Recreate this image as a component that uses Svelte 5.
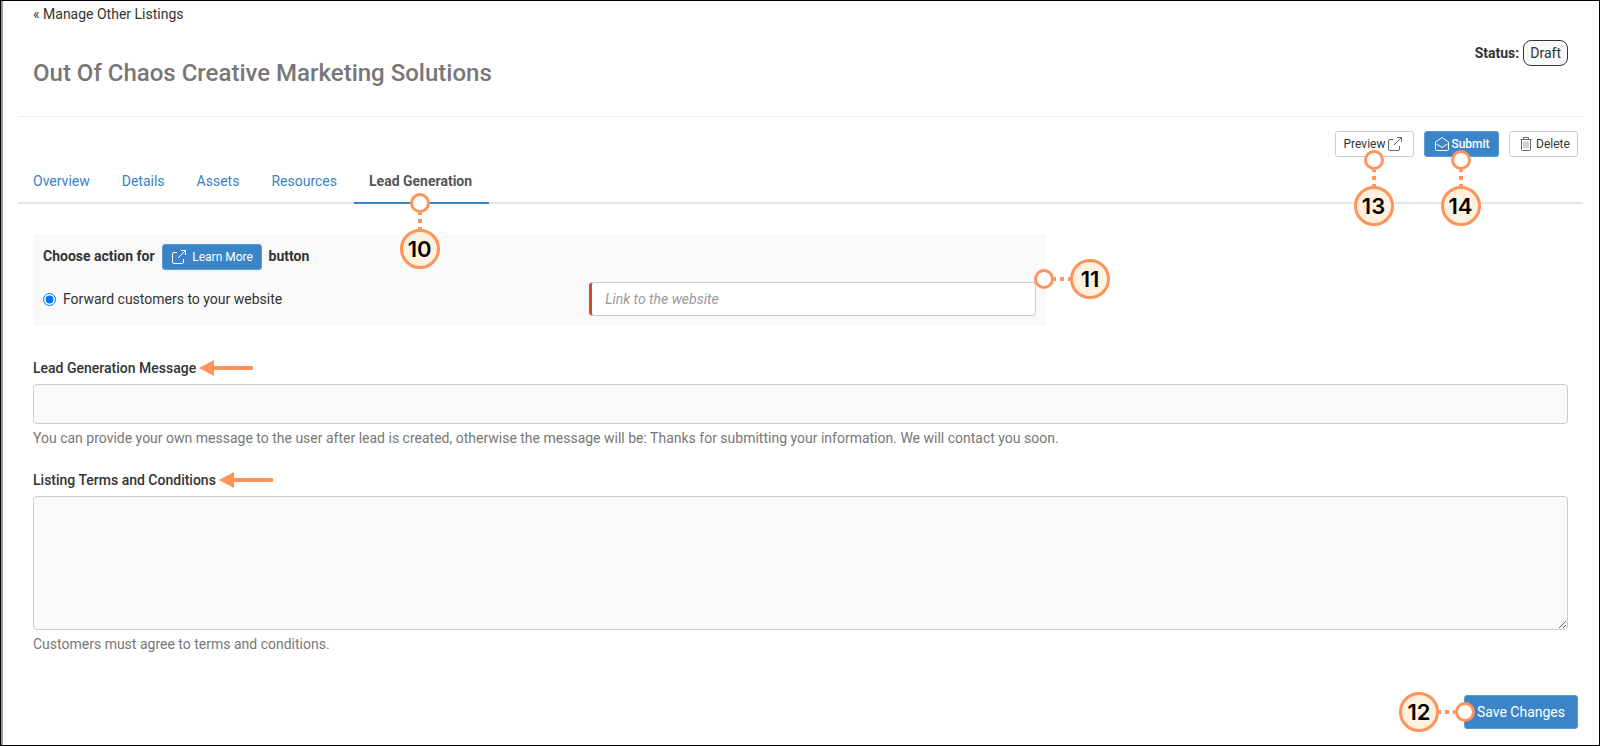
<script>
let tabs = ["Overview", "Details", "Assets", "Resources", "Lead Generation"]
let active = $state("Lead Generation")
let action = $state("forward")
let link = $state("")
let message = $state("")
let terms = $state("")
</script>

{#snippet marker(num, dir)}
    <span class="marker {dir}">
        <span class="dot"></span>
        <span class="dash"></span>
        <span class="num">{num}</span>
    </span>
{/snippet}

{#snippet external()}
    <svg class="icon" viewBox="0 0 14 14">
        <path d="M5 2.500H2a1.500 1.500 0 0 0-1.500 1.500v8A1.500 1.500 0 0 0 2 13.500h8a1.500 1.500 0 0 0 1.500-1.500V9M6 8L13.500.5M9 .5h4.500v4.500" />
    </svg>
{/snippet}

{#snippet arrow()}
    <svg class="arrow" viewBox="0 0 54 16">
        <path d="M0 8L15 0v6h39v4H15v6z" />
    </svg>
{/snippet}

<main class="page">
    <div class="content">
        <a class="back" href="#listings">« Manage Other Listings</a>
        <header>
            <h1>Out Of Chaos Creative Marketing Solutions</h1>
            <div class="status"><b>Status:</b><span class="badge">Draft</span></div>
        </header>

        <div class="actions">
            <div class="anchor">
                <button class="btn preview">Preview {@render external()}</button>
                {@render marker(13, "down")}
            </div>
            <div class="anchor">
                <button class="btn primary submit">
                    <svg class="icon" viewBox="0 0 14 14">
                        <path d="M.5 5L7 .6 13.500 5v7.500a1 1 0 0 1-1 1h-11a1 1 0 0 1-1-1zM1.500 7L7 10.500l5.500-3.500" />
                    </svg>
                    Submit
                </button>
                {@render marker(14, "down")}
            </div>
            <button class="btn delete">
                <svg class="icon" viewBox="0 0 14 14">
                    <path d="M1.500 2.500h11M4.500 2.500v-2h5v2M2.500 2.500v10a1 1 0 0 0 1 1h7a1 1 0 0 0 1-1v-10" />
                    <path class="thin" d="M5 4.500v7M7 4.500v7M9 4.500v7" />
                </svg>
                Delete
            </button>
        </div>

        <nav>
            {#each tabs as tab}
                <a href="#{tab}" class:active={tab === active} onclick={() => { active = tab }}>
                    {tab}
                    {#if tab === "Lead Generation"}{@render marker(10, "down")}{/if}
                </a>
            {/each}
        </nav>

        <form onsubmit={(e) => e.preventDefault()}>
            <div class="panel">
                <div class="choose">
                    <b>Choose action for</b>
                    <button type="button" class="btn primary learn">{@render external()} Learn More</button>
                    <b>button</b>
                </div>
                <div class="option">
                    <label class="radio">
                        <input type="radio" name="action" value="forward" bind:group={action} />
                        Forward customers to your website
                    </label>
                    <input class="link" type="text" aria-label="Link to the website" placeholder="Link to the website" bind:value={link} />
                </div>
                {@render marker(11, "right")}
            </div>

            <div class="field">
                <div class="caption"><label for="message">Lead Generation Message</label>{@render arrow()}</div>
                <input id="message" type="text" bind:value={message} />
                <p>You can provide your own message to the user after lead is created, otherwise the message will be: Thanks for submitting your information. We will contact you soon.</p>
            </div>

            <div class="field">
                <div class="caption"><label for="terms">Listing Terms and Conditions</label>{@render arrow()}</div>
                <textarea id="terms" bind:value={terms}></textarea>
                <p>Customers must agree to terms and conditions.</p>
            </div>

            <div class="footer">
                <div class="anchor">
                    <button class="btn primary save">Save Changes</button>
                    {@render marker(12, "left")}
                </div>
            </div>
        </form>
    </div>
</main>

<style>
:global(body){
    margin: 0;
    background: #fff;
}

.page, .page *{
    box-sizing: border-box;
}

.page{
    min-height: 100vh;
    border: 1px solid #000;
    font-family: Roboto, "Liberation Sans", sans-serif;
    font-size: 14px;
    line-height: 20px;
    color: #333;
}

.content{
    min-height: calc(100vh - 2px);
    border-left: 2px solid #999;
    padding: 3px 16px 16px 15px;
}

.page button, .page input, .page textarea{
    font-family: inherit;
    font-size: 14px;
    color: inherit;
}

b{
    font-weight: 700;
}

.back{
    display: block;
    width: max-content;
    margin-left: 15px;
    color: #333;
    text-decoration: none;
}

header{
    display: flex;
    justify-content: space-between;
    align-items: flex-start;
    padding: 16px 15px 26px;
    border-bottom: 1px solid #eee;
}

h1{
    margin: 16px 0 0;
    font-size: 24px;
    font-weight: 500;
    line-height: 34px;
    color: #777;
}

.status{
    display: flex;
    align-items: center;
    gap: 4px;
}

.badge{
    padding: 2px 6px;
    border: 1px solid #333;
    border-radius: 8px;
    background: #f9f9f9;
}

.actions{
    display: flex;
    justify-content: flex-end;
    gap: 10px;
    padding: 14px 5px 0;
}

.anchor{
    position: relative;
}

.page .btn{
    display: flex;
    align-items: center;
    justify-content: center;
    gap: 3px;
    height: 26px;
    padding: 0 8px;
    border: 1px solid #ccc;
    border-radius: 3px;
    background: #fff;
    font-size: 12px;
    color: #333;
    white-space: nowrap;
    cursor: pointer;
}

.page .primary{
    border-color: #5a9bd3;
    background: #3a84c7;
    color: #fff;
}

.page .preview{
    width: 79px;
    padding-right: 11px;
}

.page .submit{
    width: 75px;
    padding-left: 10px;
    font-weight: 500;
    gap: 2px;
}

.page .delete{
    width: 69px;
    padding-left: 10px;
}

.page .learn{
    gap: 6px;
    width: 100px;
    padding-left: 10px;
}

.page .save{
    height: 34px;
    padding: 0 12px;
    font-size: 14px;
}

.icon{
    width: 14px;
    height: 14px;
    fill: none;
    stroke: #666;
    stroke-width: 1;
    flex-shrink: 0;
}

.primary .icon{
    stroke: #fff;
}

.thin{
    stroke-width: 0.6;
}

nav{
    display: flex;
    gap: 2px;
    margin-bottom: 30px;
    box-shadow: inset 0 -2px #e5e5e5;
}

nav a{
    position: relative;
    padding: 14px 15px 11px;
    border-bottom: 2px solid transparent;
    color: #3a7fc4;
    text-decoration: none;
}

nav .active{
    padding-right: 17px;
    border-color: #3a84c7;
    color: #555;
    font-weight: 700;
}

form{
    padding-right: 15px;
}

.panel{
    position: relative;
    width: calc(66% - 10px);
    padding: 10px;
    margin-left: 15px;
    background: #f9f9f9;
}

.choose{
    display: flex;
    align-items: center;
    gap: 7px;
    margin-bottom: 12px;
}

.choose b{
    padding-bottom: 2px;
}

.option{
    display: flex;
    align-items: center;
    justify-content: space-between;
}

.radio{
    display: flex;
    align-items: center;
    gap: 7px;
}

.radio input{
    width: 13px;
    height: 13px;
    margin: 0;
}

.link{
    width: 45%;
    height: 34px;
    padding: 6px 12px 6px 13px;
    border: 1px solid #ccc;
    border-left: 3px solid #d9483b;
    border-radius: 4px;
    background: #fff;
}

.link::placeholder{
    color: #999;
    font-style: italic;
}

.field{
    margin: 32px 0 0 15px;
}

.field + .field{
    margin-top: 22px;
}

.caption{
    display: flex;
    align-items: center;
    gap: 3px;
    margin-bottom: 6px;
    font-weight: 500;
}

.arrow{
    width: 54px;
    height: 16px;
    fill: #ff9359;
}

#message, #terms{
    display: block;
    width: 100%;
    height: 40px;
    padding: 6px 12px;
    border: 1px solid #ccc;
    border-radius: 4px;
    background: #f9f9f9;
}

#terms{
    height: 134px;
    resize: vertical;
}

.field p{
    margin: 4px 0 0;
    color: #777;
}

.footer{
    display: flex;
    justify-content: flex-end;
    margin: 41px -10px 0 0;
}

/* numbered callouts, drawn over the form */
.marker{
    position: absolute;
    z-index: 1;
    display: flex;
    align-items: center;
    pointer-events: none;
}

.marker.down{
    flex-direction: column;
    top: calc(100% - 7px);
    left: calc(50% - 21px);
}

.marker.right{
    top: 25px;
    left: calc(100% - 12px);
}

.marker.left{
    flex-direction: row-reverse;
    top: -3px;
    right: calc(100% - 11px);
}

nav .marker.down{
    top: calc(100% - 9px);
    left: calc(50% - 22px);
}

.dot{
    width: 20px;
    height: 20px;
    border: 3px solid #ff9359;
    border-radius: 50%;
    background: #fff;
}

.dash{
    width: 16px;
    height: 4px;
    background: repeating-linear-gradient(90deg, #ff9359 0 2px, transparent 2px 6px, #ff9359 6px 10px, transparent 10px 14px);
}

.down .dash{
    width: 4px;
    height: 16px;
    background: repeating-linear-gradient(#ff9359 0 2px, transparent 2px 6px, #ff9359 6px 10px, transparent 10px 14px);
}

.num{
    width: 40px;
    height: 40px;
    border: 3px solid #ff9359;
    border-radius: 50%;
    background: #fff1df;
    color: #000;
    font-family: Inter, sans-serif;
    font-size: 22px;
    font-weight: 600;
    line-height: 34px;
    text-align: center;
}
</style>
